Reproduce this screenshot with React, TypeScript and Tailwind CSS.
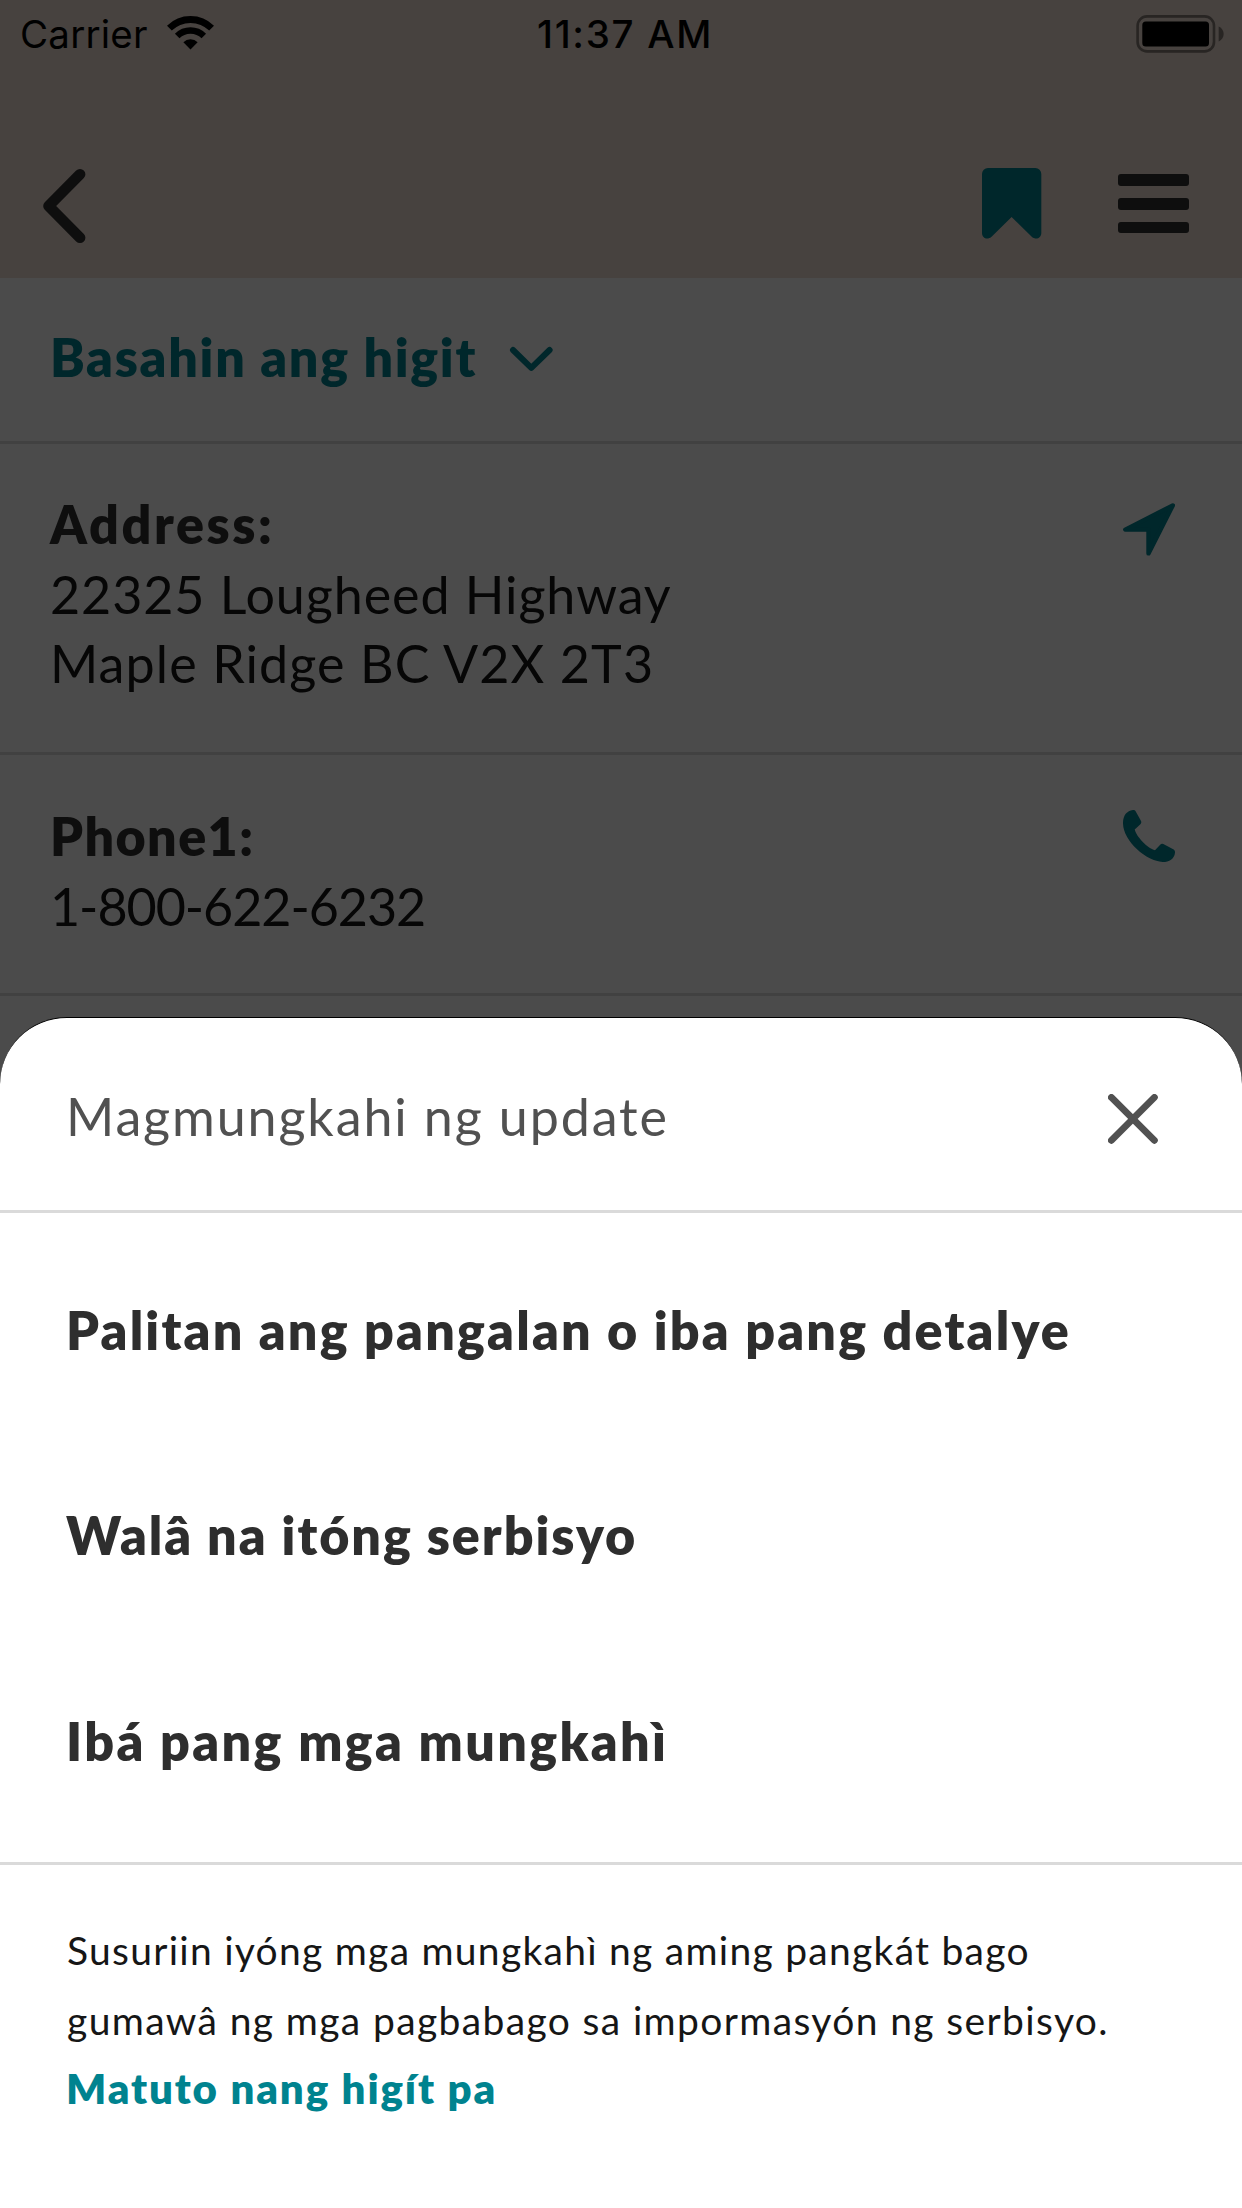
import type { ReactNode } from "react";

function WifiIcon() {
  return (
    <svg className="h-[34px] w-[47px]" viewBox="0 0 47 34" fill="none">
      <path d="M2.4 12.2A29.9 29.9 0 0 1 44.6 12.2" stroke="#000" strokeWidth="6.8" />
      <path d="M10.2 20A18.8 18.8 0 0 1 36.8 20" stroke="#000" strokeWidth="6.4" />
      <path d="M23.5 33.5L16.4 26.3A10 10 0 0 1 30.6 26.3Z" fill="#000" />
    </svg>
  );
}

function BatteryIcon() {
  return (
    <svg className="h-[38px] w-[88px]" viewBox="0 0 88 38" fill="none">
      <rect x="1.6" y="1.4" width="76.4" height="35" rx="9.5" stroke="#282523" strokeWidth="2.6" />
      <rect x="6.3" y="6.4" width="66.7" height="25" rx="3.5" fill="#000" />
      <path d="M82.7 11.6C89.3 14.5 89.3 23.5 82.7 26.4Z" fill="#282523" />
    </svg>
  );
}

function BackIcon() {
  return (
    <svg className="h-[76px] w-[44px]" viewBox="0 0 44 76" fill="none">
      <path d="M38 6.3L6.6 38L38 69.7" stroke="#0e0e0e" strokeWidth="10.8" strokeLinecap="round" strokeLinejoin="round" />
    </svg>
  );
}

function BookmarkIcon() {
  return (
    <svg className="h-[71px] w-[60px]" viewBox="0 0 60 71">
      <path d="M6 0H53.3A6 6 0 0 1 59.3 6V65C59.3 70.4 53.8 72 50 69L29.6 49L9.3 69C5.5 72 0 70.4 0 65V6A6 6 0 0 1 6 0Z" fill="#00272b" />
    </svg>
  );
}

function ChevronDownIcon() {
  return (
    <svg className="h-[26px] w-[45px]" viewBox="0 0 45 26" fill="none">
      <path d="M4 4L22.3 21.8L40.6 4" stroke="#00272b" strokeWidth="6" strokeLinecap="round" strokeLinejoin="round" />
    </svg>
  );
}

function DirectionIcon() {
  return (
    <svg className="h-[53px] w-[52px]" viewBox="0 0 52 53">
      <path d="M49.8 2.4L2.3 26.6H25.5V50.4Z" fill="#00272b" stroke="#00272b" strokeWidth="4.4" strokeLinejoin="round" />
    </svg>
  );
}

function PhoneIcon() {
  return (
    <svg className="h-[52px] w-[52px]" viewBox="0 0 52 52">
      <path
        d="M12.6 1.2L17.9 10.8Q18.9 12.7 17.4 14.2L11.7 19.6C13.2 26.5 24.5 38.4 32 40.3L37.2 34.7Q38.5 33.2 40.3 34L50.7 39.6Q52.2 40.5 52 42.7C51.3 49 46.2 52 39.7 52C24 51.6 .4 31.5 0 13.6C-.2 6 3.5 .7 10 0Q11.9 -.1 12.6 1.2Z"
        fill="#00272b"
      />
    </svg>
  );
}

function CloseIcon() {
  return (
    <svg className="h-[50px] w-[50px]" viewBox="0 0 50 50" fill="none">
      <path d="M3.4 3.4L46.4 46.4M46.4 3.4L3.4 46.4" stroke="#515151" strokeWidth="6.8" strokeLinecap="round" />
    </svg>
  );
}

function MenuIcon() {
  return (
    <div className="flex w-[71px] flex-col gap-3">
      <div className="h-3 rounded-[3px] bg-[#0e0e0e]" />
      <div className="h-3 rounded-[3px] bg-[#0e0e0e]" />
      <div className="h-[11px] rounded-[3px] bg-[#0e0e0e]" />
    </div>
  );
}

function DetailRow({ className, icon, children }: { className: string; icon: ReactNode; children: ReactNode }) {
  return (
    <section className={`flex items-start justify-between border-b-[3px] border-[#414141] pr-[67px] pl-[50px] ${className}`}>
      <div className="text-[52px] leading-[69.5px] whitespace-nowrap text-[#060606]">{children}</div>
      {icon}
    </section>
  );
}

export default function App() {
  return (
    <div className="relative flex h-[2208px] w-[1242px] flex-col overflow-hidden bg-[#4b4b4b] font-[Lato,sans-serif]">
      <header className="flex h-[278px] shrink-0 flex-col bg-[#47423f]">
        <div className="grid h-[68px] grid-cols-[1fr_auto_1fr] font-[Inter,sans-serif] text-[38.5px] leading-[60px] text-black">
          <div className="flex items-start pl-5">
            <span className="mt-1 tracking-[0.2px]">Carrier</span>
            <div className="mt-4 ml-[19px]">
              <WifiIcon />
            </div>
          </div>
          <span className="mt-1 ml-2 font-medium tracking-[1.7px]">11:37 AM</span>
          <div className="mt-[15px] mr-[18px] flex items-start justify-end">
            <BatteryIcon />
          </div>
        </div>
        <div className="mt-[100px] flex items-start justify-between pr-[53px] pl-[42px]">
          <BackIcon />
          <div className="flex items-start gap-[76px]">
            <BookmarkIcon />
            <div className="mt-1.5">
              <MenuIcon />
            </div>
          </div>
        </div>
      </header>

      <section className="flex h-[166px] shrink-0 items-start border-b-[3px] border-[#414141] pt-11 pl-[50px]">
        <span className="text-[52px] leading-[70px] font-extrabold tracking-[1.7px] whitespace-nowrap text-[#00272b]">Basahin ang higit</span>
        <div className="mt-6 ml-8">
          <ChevronDownIcon />
        </div>
      </section>

      <DetailRow
        className="h-[311px] shrink-0 pt-[46px]"
        icon={<div className="mt-[13px]"><DirectionIcon /></div>}
      >
        <div className="font-extrabold tracking-[2.6px] text-[#0e0e0e]">Address:</div>
        <div className="tracking-[0.93px]">22325 Lougheed Highway</div>
        <div className="tracking-[1.1px]">Maple Ridge BC V2X 2T3</div>
      </DetailRow>

      <DetailRow
        className="h-[241px] shrink-0 pt-[47px]"
        icon={<div className="mt-2"><PhoneIcon /></div>}
      >
        <div className="font-extrabold tracking-[1.4px] text-[#0e0e0e]">Phone1:</div>
        <div className="tracking-[-1.04px]">1-800-622-6232</div>
      </DetailRow>

      <div role="dialog" className="absolute inset-x-0 bottom-0 flex h-[1191px] flex-col rounded-t-[67px] border-t border-black bg-white">
        <div className="flex h-[195px] shrink-0 items-start justify-between border-b-[3px] border-[#dadada] pt-[63px] pr-[84px] pl-[66px]">
          <h2 className="text-[52px] leading-[70px] tracking-[1.88px] whitespace-nowrap text-[#515151]">Magmungkahi ng update</h2>
          <button className="mt-[13px]" aria-label="Isara">
            <CloseIcon />
          </button>
        </div>

        <ul className="flex h-[652px] shrink-0 flex-col border-b-[3px] border-[#dadada] pt-3.5 pl-[66px] text-[52px] leading-[70px] font-extrabold whitespace-nowrap text-[#2e2e2e]">
          <li className="flex h-[205.5px] items-center tracking-[2.2px]">Palitan ang pangalan o iba pang detalye</li>
          <li className="flex h-[205.5px] items-center tracking-[1.97px]">Walâ na itóng serbisyo</li>
          <li className="flex h-[205.5px] items-center tracking-[2.36px]">Ibá pang mga mungkahì</li>
        </ul>

        <div className="pt-[51px] pl-[67px] text-[39px] leading-[69.5px] whitespace-nowrap text-[#161616]">
          <p className="tracking-[1.26px]">Susuriin iyóng mga mungkahì ng aming pangkát bago</p>
          <p className="tracking-[1.36px]">gumawâ ng mga pagbabago sa impormasyón ng serbisyo.</p>
          <a className="-mt-px -ml-px block text-[42px] font-extrabold tracking-[1.87px] text-[#00838f]">Matuto nang higít pa</a>
        </div>
      </div>
    </div>
  );
}
